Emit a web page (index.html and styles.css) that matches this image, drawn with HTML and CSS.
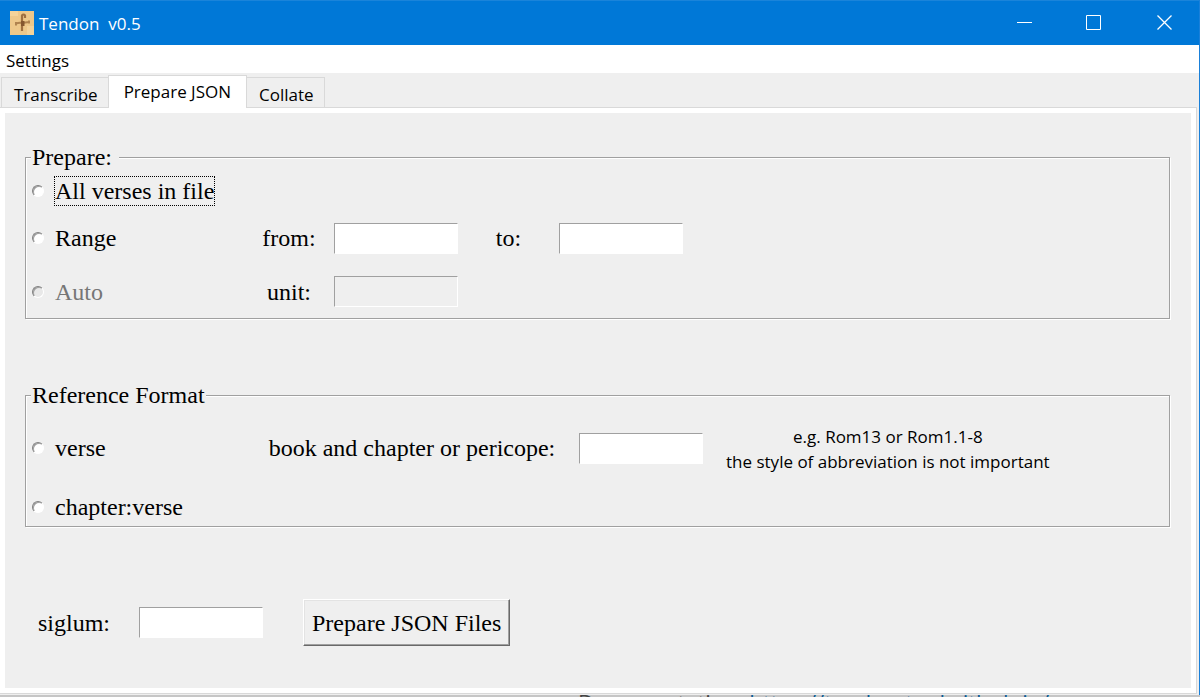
FILE: index.html
```html
<!DOCTYPE html>
<html lang="en">
<head>
<meta charset="utf-8">
<title>Tendon v0.5</title>
<link rel="stylesheet" href="styles.css">
</head>
<body>
<div class="window">
  <header class="titlebar">
    <svg class="app-icon" viewBox="0 0 24 24" aria-hidden="true">
      <rect width="24" height="24" fill="#eec88a"/>
      <path d="M0 0h8v5H0zM17 15h7v9h-7z" fill="#f4d39a"/>
      <path d="M15 7V4.500q-1.500-2-3 0V20" fill="none" stroke="#a07040" stroke-width="2.200"/>
      <path d="M6 12.500q3-1 6-.5l7-1M6 11v3.500M19 9.500v3" fill="none" stroke="#b0834f" stroke-width="2"/>
      <path d="M11 10h3.500v5H11z" fill="#85572f"/>
    </svg>
    <h1 class="title">Tendon&nbsp; v0.5</h1>
    <div class="window-buttons">
      <button class="window-button" type="button" aria-label="Minimize"><svg viewBox="0 0 16 16"><path d="M1 7.500h15"/></svg></button>
      <button class="window-button" type="button" aria-label="Maximize"><svg viewBox="0 0 16 16"><path d="M.5 .5h14v14H.5z"/></svg></button>
      <button class="window-button" type="button" aria-label="Close"><svg viewBox="0 0 16 16"><path stroke-width="1.300" d="M1.500 .5l14 14M15.500 .5l-14 14"/></svg></button>
    </div>
  </header>

  <nav class="menubar"><button class="menu" type="button">Settings</button></nav>

  <div class="tabs" role="tablist">
    <button class="tab" type="button" role="tab">Transcribe</button>
    <button class="tab active" type="button" role="tab" aria-selected="true">Prepare JSON</button>
    <button class="tab" type="button" role="tab">Collate</button>
  </div>

  <main class="panel">
    <form class="page">
      <fieldset class="group">
        <legend class="legend legend-wide">Prepare:</legend>
        <div class="grid grid-prepare">
          <label class="choice"><input class="radio" type="radio" name="scope"><span class="choice-text focused">All verses in file</span></label>
          <label class="choice range-row"><input class="radio" type="radio" name="scope"><span class="choice-text">Range</span></label>
          <label class="caption" for="from">from:</label>
          <input class="entry" id="from" type="text">
          <label class="caption" for="to">to:</label>
          <input class="entry" id="to" type="text">
          <label class="choice auto-row"><input class="radio" type="radio" name="scope" disabled><span class="choice-text disabled">Auto</span></label>
          <label class="caption" for="unit">unit:</label>
          <input class="entry" id="unit" type="text" disabled>
        </div>
      </fieldset>

      <fieldset class="group">
        <legend class="legend">Reference Format</legend>
        <div class="grid grid-format">
          <label class="choice"><input class="radio" type="radio" name="format"><span class="choice-text">verse</span></label>
          <label class="caption" for="book">book and chapter or pericope:</label>
          <input class="entry" id="book" type="text">
          <p class="note">e.g. Rom13 or Rom1.1-8<br>the style of abbreviation is not important</p>
          <label class="choice"><input class="radio" type="radio" name="format"><span class="choice-text">chapter:verse</span></label>
        </div>
      </fieldset>

      <div class="actions">
        <label class="siglum" for="siglum">siglum:</label>
        <input class="entry" id="siglum" type="text">
        <button class="submit" type="button">Prepare JSON Files</button>
      </div>
    </form>
  </main>
</div>
<footer class="behind"><span>Documentation:</span> <a class="behind-link" href="#">https://tendon-tool.github.io/</a></footer>
</body>
</html>
```

FILE: styles.css
```css
* { box-sizing: border-box; }

body {
  margin: 0;
  min-height: 100vh;
  display: flex;
  flex-direction: column;
  background: #c6c6c6;
  color: #000;
  font-family: "Open Sans", "Noto Sans", sans-serif;
  font-size: 17px;
}

button, input { font: inherit; color: inherit; }

.window {
  flex: 1;
  display: flex;
  flex-direction: column;
  background: #efefef;
  border-right: 1px solid #1a80d9;
}

.titlebar {
  display: flex;
  align-items: center;
  height: 45px;
  padding-left: 10px;
  background: #0078d7;
  border-top: 1px solid #1a84da;
  color: #fff;
}
.app-icon { width: 24px; height: 24px; }
.title { flex: 1; margin: 0 0 0 5px; padding-top: 2px; font-size: 17px; font-weight: 400; line-height: 24px; }
.window-buttons { display: flex; }
.window-button {
  width: 70px;
  height: 44px;
  padding: 0;
  border: 0;
  background: none;
  display: flex;
  align-items: center;
  justify-content: center;
}
.window-button svg { width: 16px; height: 16px; fill: none; stroke: #fff; }

.menubar { height: 28px; background: #fff; }
.menu { height: 28px; padding: 3px 6px 0; border: 0; background: none; line-height: 24px; }

.tabs { display: flex; align-items: flex-end; height: 34px; padding-left: 1px; }
.tab {
  height: 30px;
  padding: 4px 10px 0 12px;
  border: 1px solid #d9d9d9;
  border-bottom: 0;
  background: #efefef;
  line-height: 24px;
}
.tab.active {
  position: relative;
  height: 33px;
  margin: 0 -1px -1px;
  padding: 3px 15px 3px;
  background: #fff;
}

.panel {
  flex: 1;
  display: flex;
  margin: 0 2px 1px 0;
  padding: 5px;
  background: #fff;
  border: solid #d9d9d9;
  border-width: 1px 1px 1px 0;
}
.page {
  flex: 1;
  padding: 30px 21px 40px 20px;
  background: #efefef;
  font-family: "Liberation Serif", "Times New Roman", serif;
  font-size: 24px;
  line-height: 28px;
}

.group {
  min-width: 0;
  margin: 0 0 62px;
  padding: 0;
  border: 1px solid #a0a0a0;
  box-shadow: 1px 1px 0 #fff, inset 1px 1px 0 #fff;
}
.legend { margin-left: 5px; padding: 0 1px; background: #efefef; }
.legend-wide { padding-right: 7px; }

.grid { display: grid; align-items: center; }
.grid-prepare { grid-template-columns: 218px 90px 124px 101px 124px; grid-template-rows: 40px 54px 53px; }
.grid-format { grid-template-columns: 219px 334px 124px auto 1fr; grid-template-rows: 78px 39px; }
.range-row, .auto-row { grid-column: 1; }
.grid-format .choice { grid-column: 1; }

.choice { display: flex; align-items: center; padding-left: 6px; white-space: nowrap; }
.radio {
  appearance: none;
  width: 12px;
  height: 12px;
  margin: 0 10px 0 0;
  border: 1px solid;
  border-color: #808080 #fff #fff #808080;
  border-radius: 50%;
  background: #fff;
  box-shadow: inset 1px 1px 0 #a0a0a0;
}
.radio:disabled { background: #e8e8e8; }
.choice-text { border: 1px dotted transparent; }
.focused { border-color: #000; }
.disabled { color: #767676; }

.caption { text-align: center; white-space: nowrap; }
.entry {
  width: 124px;
  height: 31px;
  padding: 0 4px;
  border: 1px solid;
  border-color: #a0a0a0 #fff #fff #a0a0a0;
  border-radius: 0;
  background: #fff;
}
.entry:disabled { background: #efefef; }
.note {
  margin: 2px 0 0 23px;
  font-family: "Open Sans", "Noto Sans", sans-serif;
  font-size: 17px;
  line-height: 25px;
  text-align: center;
}

.actions { display: flex; align-items: center; margin-top: 72px; padding-left: 13px; }
.siglum { width: 101px; }
.submit {
  height: 47px;
  margin-left: 40px;
  padding: 0 8px;
  background: #efefef;
  border: 1px solid;
  border-color: #fff #696969 #696969 #fff;
  box-shadow: inset -1px -1px 0 #a0a0a0, inset 1px 1px 0 #e3e3e3;
}

.behind {
  height: 2px;
  padding-left: 578px;
  overflow: hidden;
  color: #444;
  font-size: 22px;
  line-height: 14px;
  white-space: nowrap;
}
.behind-link { color: #0b5c94; text-decoration: none; }
```
